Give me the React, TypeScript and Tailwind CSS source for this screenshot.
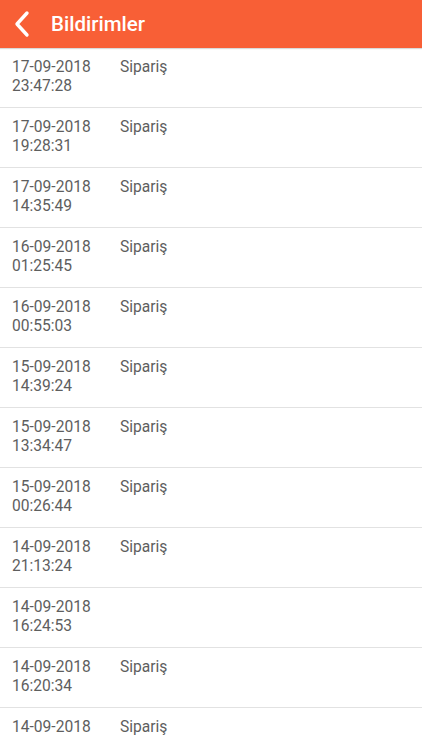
import type { ReactNode } from "react";

// Bildirimler — notification list: orange app bar + rows of date/time and type.

const rows: { date: string; time?: string; kind?: string }[] = [
  { date: "17-09-2018", time: "23:47:28", kind: "Sipariş" },
  { date: "17-09-2018", time: "19:28:31", kind: "Sipariş" },
  { date: "17-09-2018", time: "14:35:49", kind: "Sipariş" },
  { date: "16-09-2018", time: "01:25:45", kind: "Sipariş" },
  { date: "16-09-2018", time: "00:55:03", kind: "Sipariş" },
  { date: "15-09-2018", time: "14:39:24", kind: "Sipariş" },
  { date: "15-09-2018", time: "13:34:47", kind: "Sipariş" },
  { date: "15-09-2018", time: "00:26:44", kind: "Sipariş" },
  { date: "14-09-2018", time: "21:13:24", kind: "Sipariş" },
  { date: "14-09-2018", time: "16:24:53" },
  { date: "14-09-2018", time: "16:20:34", kind: "Sipariş" },
  { date: "14-09-2018", kind: "Sipariş" },
];

export default function App(): ReactNode {
  return (
    <div className="h-[750px] w-[422px] overflow-hidden bg-white font-['Roboto',sans-serif]">
      <header className="flex h-[48px] items-center bg-[#f85f36] shadow-[0_1px_1px_rgba(0,0,0,0.15)]">
        <button type="button" className="flex h-[48px] w-[40px] items-center justify-center pl-[4px]">
          <svg width="18" height="28" viewBox="0 0 18 28" fill="none">
            <path d="M14 3 L4 14 L14 25" stroke="white" strokeWidth="3.4" strokeLinecap="round" strokeLinejoin="round" />
          </svg>
        </button>
        <h1 className="ml-[11px] text-[20.5px] font-medium text-white">Bildirimler</h1>
      </header>

      <ul>
        {rows.map((row, i) => (
          <li
            key={i}
            className="flex h-[60px] border-b border-[#e2e2e2] pl-[12px] pt-[10px] text-[15.6px] leading-[19px] text-[#5e5e5e]"
          >
            <div className="w-[108px]">
              <div>{row.date}</div>
              {row.time ? <div>{row.time}</div> : null}
            </div>
            {row.kind ? <div>{row.kind}</div> : null}
          </li>
        ))}
      </ul>
    </div>
  );
}
